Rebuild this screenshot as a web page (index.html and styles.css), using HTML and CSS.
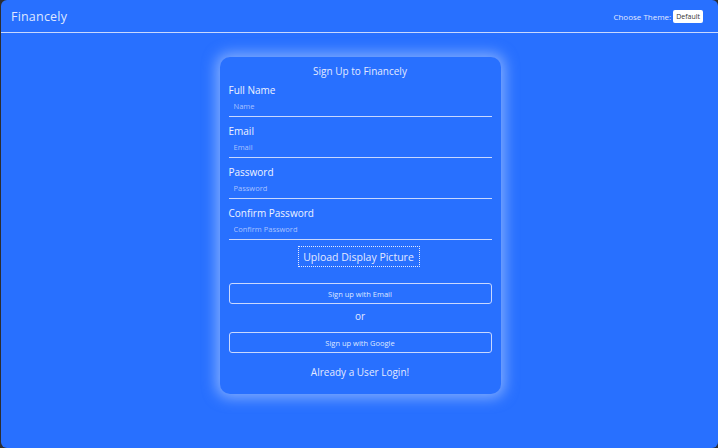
FILE: index.html
```html
<!DOCTYPE html>
<html>
<head>
<meta charset="utf-8">
<link rel="stylesheet" href="styles.css">
</head>
<body>
<div class="app">
  <header class="topbar">
    <div class="brand">Financely</div>
    <div class="theme">
      <span class="theme-label">Choose Theme:</span>
      <span class="theme-select">Default</span>
    </div>
  </header>
  <main class="main">
    <div class="card">
      <div class="card-title">Sign Up to Financely</div>
      <div class="field">
        <label class="label">Full Name</label>
        <input class="input" placeholder="Name">
      </div>
      <div class="field">
        <label class="label">Email</label>
        <input class="input" placeholder="Email">
      </div>
      <div class="field">
        <label class="label">Password</label>
        <input class="input" placeholder="Password">
      </div>
      <div class="field">
        <label class="label">Confirm Password</label>
        <input class="input" placeholder="Confirm Password">
      </div>
      <div class="upload-row"><span class="upload">Upload Display Picture</span></div>
      <div class="btn">Sign up with Email</div>
      <div class="or">or</div>
      <div class="btn">Sign up with Google</div>
      <div class="login">Already a User Login!</div>
    </div>
  </main>
</div>
</body>
</html>
```
FILE: styles.css
```css
* { box-sizing: border-box; }
html, body { margin: 0; padding: 0; height: 100%; }
body {
  background: #2b2d33;
  font-family: "Open Sans", "Liberation Sans", sans-serif;
  color: #e3e9ff;
}
.app {
  margin-left: 1px;
  height: 448px;
  background: #2870ff;
  border-radius: 6px;
  overflow: hidden;
  display: flex;
  flex-direction: column;
}
.topbar {
  height: 33px;
  border-bottom: 1px solid #c9d8ff;
  display: flex;
  align-items: center;
  justify-content: space-between;
  padding: 0 15px 0 10px;
}
.brand { font-size: 12.5px; color: #dfe7ff; letter-spacing: 0.2px; }
.theme { display: flex; align-items: center; gap: 2px; }
.theme-label { font-size: 8px; color: #e3e9ff; }
.theme-select {
  background: #fff;
  color: #333;
  font-size: 7px;
  border-radius: 2px;
  padding: 2px 3px;
  line-height: 9px;
}
.main {
  flex: 1;
  display: flex;
  justify-content: center;
  padding-top: 24px;
  padding-left: 1px;
}
.card {
  width: 281px;
  height: 337px;
  background: #2870ff;
  border-radius: 10px;
  box-shadow: 0 0 14px 4px rgba(200, 220, 255, 0.55);
  padding: 8px 9px 0 9px;
  display: flex;
  flex-direction: column;
}
.card-title {
  text-align: center;
  font-size: 10px;
  line-height: 12px;
  margin-bottom: 7px;
}
.field { display: flex; flex-direction: column; margin-bottom: 8px; }
.label { font-size: 10px; line-height: 12px; color: #eef2ff; }
.input {
  background: transparent;
  border: none;
  border-bottom: 1px solid #c9d8ff;
  height: 21px;
  padding: 0 5px;
  font-family: inherit;
  font-size: 7.5px;
  color: #fff;
  outline: none;
}
.input::placeholder { color: #a9c2ff; }
.upload-row { display: flex; justify-content: center; margin-top: -2px; padding-right: 3px; }
.upload {
  border: 1.5px dotted #e3e9ff;
  font-size: 10.5px;
  line-height: 12px;
  padding: 3.5px 0;
  width: 122px;
  white-space: nowrap;
  text-align: center;
}
.btn {
  margin-top: 16px;
  height: 21px;
  border: 1px solid #c9d8ff;
  border-radius: 3px;
  display: flex;
  align-items: center;
  justify-content: center;
  font-size: 7.5px;
  color: #dfe7ff;
}
.or {
  text-align: center;
  font-size: 10px;
  line-height: 12px;
  margin-top: 6px;
  margin-bottom: -6px;
}
.login {
  text-align: center;
  font-size: 10px;
  line-height: 12px;
  margin-top: 13px;
}
```
